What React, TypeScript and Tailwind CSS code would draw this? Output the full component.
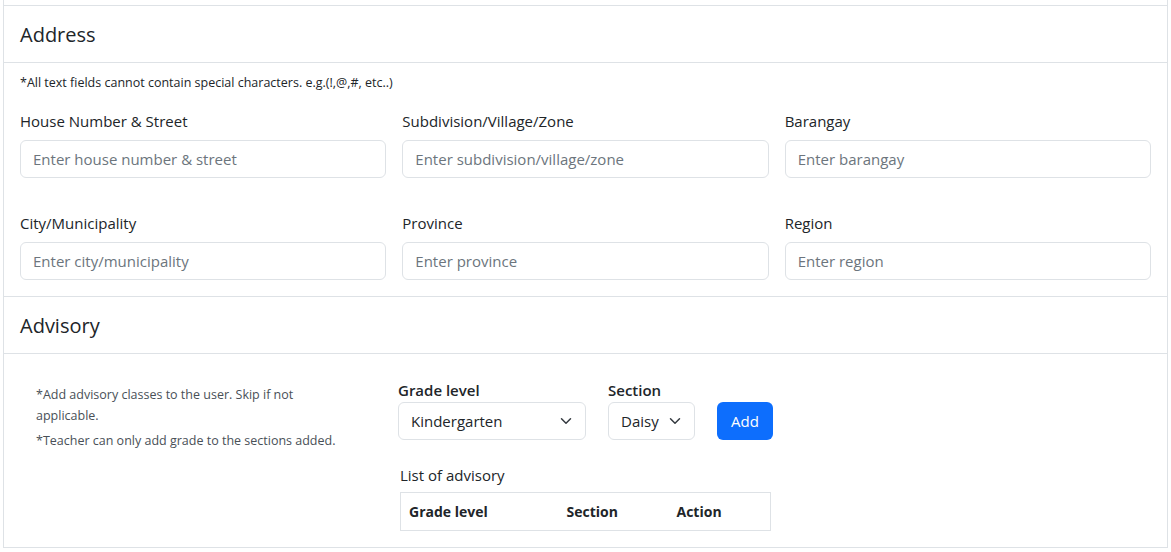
import { ChangeEvent, useState } from 'react'

const fields = [
  { label: 'House Number & Street', placeholder: 'Enter house number & street' },
  { label: 'Subdivision/Village/Zone', placeholder: 'Enter subdivision/village/zone' },
  { label: 'Barangay', placeholder: 'Enter barangay' },
  { label: 'City/Municipality', placeholder: 'Enter city/municipality' },
  { label: 'Province', placeholder: 'Enter province' },
  { label: 'Region', placeholder: 'Enter region' },
]

function Chevron() {
  return (
    <svg
      className="pointer-events-none absolute right-[12px] top-1/2 h-[12px] w-[16px] -translate-y-1/2"
      viewBox="0 0 16 16"
      fill="none"
      stroke="#343a40"
      strokeWidth="2"
      strokeLinecap="round"
      strokeLinejoin="round"
    >
      <path d="m2 5 6 6 6-6" />
    </svg>
  )
}

export default function App() {
  const [grade, setGrade] = useState('Kindergarten')
  const [section, setSection] = useState('Daisy')

  return (
    <div className="min-h-screen bg-white font-['Open_Sans','Liberation_Sans',sans-serif] text-[#212529]">
      <div className="mx-[3px] border-x border-[#dee2e6] pt-[5px]">
        {/* Address */}
        <div className="border-t border-[#dee2e6]">
          <div className="border-b border-[#dee2e6] px-4 pt-[17px] pb-[15px]">
            <h5 className="text-[20px] leading-[24px]">Address</h5>
          </div>
          <div className="px-4 pt-[11px] pb-4">
            <p className="mb-[17px] text-[12.5px] leading-[18px] text-[#212529]">
              *All text fields cannot contain special characters. e.g.(!,@,#, etc..)
            </p>
            <div className="grid grid-cols-3 gap-x-4 gap-y-[33px]">
              {fields.map((f) => (
                <div key={f.label}>
                  <label className="mb-[7px] block text-[15px] leading-[24px]">{f.label}</label>
                  <input
                    type="text"
                    placeholder={f.placeholder}
                    className="block h-[38px] w-full rounded-[6px] border border-[#dee2e6] px-3 text-[15px] placeholder:text-[#6c757d] focus:outline-none"
                  />
                </div>
              ))}
            </div>
          </div>
        </div>

        {/* Advisory */}
        <div className="border-t border-[#dee2e6]">
          <div className="border-b border-[#dee2e6] px-4 pt-[17px] pb-[15px]">
            <h5 className="text-[20px] leading-[24px]">Advisory</h5>
          </div>
          <div className="flex border-b border-[#dee2e6] px-4 pt-6 pb-4">
            <div className="w-[378px] shrink-0 px-4 pt-[6px] text-[12.5px] text-[#495057]">
              <p className="w-[320px] leading-[21px]">*Add advisory classes to the user. Skip if not applicable.</p>
              <p className="mt-[4px] leading-[21px]">*Teacher can only add grade to the sections added.</p>
            </div>
            <div>
              <div className="flex items-end">
                <div className="w-[188px]">
                  <label className="block text-[15px] font-semibold leading-[24px]">Grade level</label>
                  <div className="relative">
                    <select
                      value={grade}
                      onChange={(e: ChangeEvent<HTMLSelectElement>) => setGrade(e.target.value)}
                      className="h-[38px] w-full appearance-none rounded-[6px] border border-[#dee2e6] bg-white pl-3 pr-9 text-[15px] text-[#212529] focus:outline-none"
                    >
                      <option>Kindergarten</option>
                      <option>Grade 1</option>
                      <option>Grade 2</option>
                    </select>
                    <Chevron />
                  </div>
                </div>
                <div className="ml-[22px] w-[87px]">
                  <label className="block text-[15px] font-semibold leading-[24px]">Section</label>
                  <div className="relative">
                    <select
                      value={section}
                      onChange={(e: ChangeEvent<HTMLSelectElement>) => setSection(e.target.value)}
                      className="h-[38px] w-full appearance-none rounded-[6px] border border-[#dee2e6] bg-white pl-3 pr-8 text-[15px] text-[#212529] focus:outline-none"
                    >
                      <option>Daisy</option>
                      <option>Rose</option>
                    </select>
                    <Chevron />
                  </div>
                </div>
                <button className="ml-[22px] h-[38px] rounded-[6px] bg-[#0d6efd] px-[14px] text-[15px] text-white">
                  Add
                </button>
              </div>
              <p className="mt-[23px] mb-[5px] pl-[2px] text-[15px] leading-[24px]">List of advisory</p>
              <table className="ml-[2px] w-[371px] border border-[#dee2e6] text-left text-[14px]">
                <thead>
                  <tr>
                    <th className="w-[158px] px-2 py-2 font-bold leading-[21px]">Grade level</th>
                    <th className="w-[110px] px-2 py-2 font-bold leading-[21px]">Section</th>
                    <th className="px-2 py-2 font-bold leading-[21px]">Action</th>
                  </tr>
                </thead>
              </table>
            </div>
          </div>
        </div>
      </div>
    </div>
  )
}
